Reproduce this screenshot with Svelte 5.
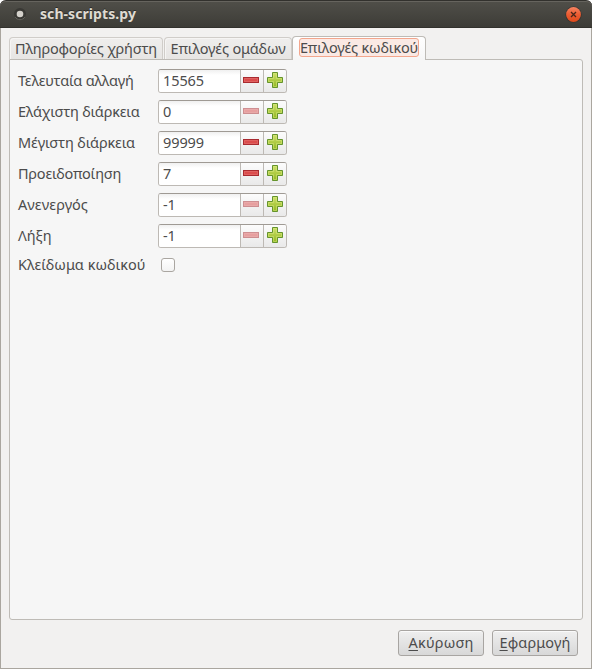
<script>
  // Spreads a label's letters so that it fills the given width.
  function fit(node, width) {
    const natural = node.getBoundingClientRect().width;
    const count = node.textContent.length;
    node.style.letterSpacing = `${(width - natural) / count}px`;
  }

  let rows = $state([
    { label: 'Τελευταία αλλαγή', width: 115.5, value: '15565', min: false },
    { label: 'Ελάχιστη διάρκεια', width: 121.5, value: '0', min: true },
    { label: 'Μέγιστη διάρκεια', width: 117, value: '99999', min: false },
    { label: 'Προειδοποίηση', width: 103, value: '7', min: false },
    { label: 'Ανενεργός', width: 70, value: '-1', min: true },
    { label: 'Λήξη', width: 33.5, value: '-1', min: true }
  ]);
</script>

<div class="window">
  <header>
    <svg class="appicon" width="14" height="14" viewBox="0 0 14 14">
      <circle cx="7" cy="7" r="6" fill="#393834" />
      <path d="M2 10a6 6 0 0 0 10 0" fill="none" stroke="#64635d" />
      <circle cx="7" cy="7" r="3.3" fill="#d4d1cb" />
    </svg>
    <h1><span use:fit={96}>sch-scripts.py</span></h1>
    <svg class="close" width="17" height="17" viewBox="0 0 17 17">
      <defs>
        <linearGradient id="orange" x1="0" y1="0" x2="0" y2="1">
          <stop offset="0" stop-color="#f58462" />
          <stop offset=".5" stop-color="#ec5c32" />
          <stop offset="1" stop-color="#df4a1b" />
        </linearGradient>
      </defs>
      <circle cx="8.5" cy="8.5" r="8.1" fill="#35332f" />
      <circle cx="8.5" cy="8.5" r="7.4" fill="url(#orange)" />
      <path d="M6 6l5 5M11 6l-5 5" stroke="#48271b" stroke-width="1.3" />
    </svg>
  </header>

  <nav>
    <button class="tab first"><span use:fit={142}>Πληροφορίες χρήστη</span></button>
    <button class="tab second"><span use:fit={115}>Επιλογές ομάδων</span></button>
    <button class="tab active"><span class="focus"><span use:fit={118}>Επιλογές κωδικού</span></span></button>
  </nav>

  <main>
    {#each rows as row}
      <div class="row">
        <div class="label"><span use:fit={row.width}>{row.label}</span></div>
        <div class="spin">
          <div class="value">{row.value}</div>
          <div class="step">
            <svg class:dim={row.min} width="16" height="6" viewBox="0 0 16 6">
              <rect x=".5" y=".5" width="15" height="5" fill="#db4d4d" stroke="#a92b30" />
              <path d="M1.5 1.5h13v3h-13z" fill="none" stroke="#e67775" opacity=".5" />
            </svg>
          </div>
          <div class="step plus">
            <svg width="16" height="16" viewBox="0 0 16 16">
              <defs>
                <linearGradient id="green" x1="0" y1="0" x2="0" y2="1">
                  <stop offset="0" stop-color="#cfe16b" />
                  <stop offset="1" stop-color="#91b720" />
                </linearGradient>
              </defs>
              <path d="M5.5.5h5v5h5v5h-5v5h-5v-5h-5v-5h5z" fill="url(#green)" stroke="#65942c" />
              <path d="M6.5 6.5v-5h3v5h5v3h-5v5h-3v-5h-5v-3z" fill="none" stroke="#d9ea82" opacity=".5" />
            </svg>
          </div>
        </div>
      </div>
    {/each}
    <div class="row lock">
      <div class="label"><span use:fit={127.5}>Κλείδωμα κωδικού</span></div>
      <div class="check"></div>
    </div>
  </main>

  <footer>
    <button class="action"><span use:fit={65}><u>Α</u>κύρωση</span></button>
    <button class="action"><span use:fit={71}><u>Ε</u>φαρμογή</span></button>
  </footer>
</div>

<style>
  :global(body) { background: #fff; }
  .window {
    box-sizing: border-box;
    width: 592px;
    height: 669px;
    display: flex;
    flex-direction: column;
    background: #f2f1f0;
    border: 1px solid #aaa69f;
    border-top: 0;
    border-radius: 6px 6px 0 0;
    font: 14.5px/20px "Noto Sans", "Open Sans", sans-serif;
    color: #4c4c4c;
    white-space: nowrap;
  }
  span { display: inline-block; }
  button { font: inherit; color: inherit; margin: 0; }
  header {
    box-sizing: border-box;
    height: 28px;
    flex: none;
    margin: 0 -1px;
    padding: 0 10px 0 13px;
    display: flex;
    align-items: center;
    background: linear-gradient(#504f49, #3d3c37);
    border: solid #32312d;
    border-width: 1px 0;
    border-radius: 6px 6px 0 0;
    box-shadow: inset 0 1px #66645e;
  }
  .close { margin-left: auto; }
  h1 {
    margin: 0 0 0 13px;
    font-size: 14px;
    line-height: 20px;
    font-weight: 700;
    color: #dfdbd2;
    text-shadow: 0 -1px #2c2b28;
  }
  nav {
    height: 32px;
    flex: none;
    display: flex;
    align-items: flex-end;
    padding-left: 8px;
    position: relative;
    z-index: 1;
  }
  .tab {
    box-sizing: border-box;
    height: 22px;
    margin-bottom: 1px;
    padding: 0 0 2px;
    display: flex;
    justify-content: center;
    align-items: center;
    border: 1px solid #d0cdc9;
    border-bottom: 0;
    border-radius: 4px 4px 0 0;
    background: linear-gradient(#efeeed, #e7e5e3);
    box-shadow: inset 1px 1px #f6f5f4;
  }
  .first { width: 154px; }
  .second { width: 128px; margin-left: 1px; }
  .active {
    width: 134px;
    height: 24px;
    margin-bottom: 0;
    padding: 0;
    border-color: #bebbb6;
    background: linear-gradient(#fff, #f6f6f6);
    box-shadow: none;
  }
  .focus {
    box-sizing: border-box;
    height: 19px;
    width: 120px;
    margin-bottom: 2px;
    line-height: 16px;
    border: 1px solid #f3a68d;
    border-radius: 3px;
    background: #fae9e4;
  }
  .focus span { line-height: 16px; }
  main {
    box-sizing: border-box;
    width: 574px;
    height: 561px;
    flex: none;
    margin: -1px 0 0 8px;
    padding: 9px 0 0 8px;
    border: 1px solid #bebbb6;
    border-radius: 0 3px 3px 3px;
    background: #f6f6f6;
  }
  .row { display: flex; height: 24px; margin-bottom: 7px; }
  .label { width: 140px; line-height: 22px; }
  .spin {
    box-sizing: border-box;
    width: 129px;
    display: flex;
    border: 1px solid #bdb9b4;
    border-top-color: #9f9a94;
    border-radius: 3px;
    background: #fff;
    overflow: hidden;
  }
  .value {
    width: 77px;
    padding-left: 4px;
    line-height: 21px;
    letter-spacing: -.1px;
    background: linear-gradient(#f0f0f0, #fff 5px);
  }
  .step {
    box-sizing: border-box;
    width: 23px;
    border-left: 1px solid #bdb9b4;
    background: linear-gradient(#fcfcfc, #e9e9e9);
    display: flex;
    align-items: center;
    justify-content: center;
    padding-bottom: 2px;
  }
  .plus { flex: 1; }
  .step svg { flex: none; margin-right: 2px; }
  .plus svg { margin: 0; }
  .dim { opacity: .5; }
  .lock { margin-top: -2px; }
  .check {
    box-sizing: border-box;
    width: 14px;
    height: 14px;
    margin: 5px 0 0 3px;
    border: 1px solid #aaa6a1;
    border-radius: 3px;
    background: linear-gradient(#fff, #f3f3f3);
  }
  footer { display: flex; justify-content: flex-end; gap: 8px; padding: 10px 13px 0 0; }
  .action {
    box-sizing: border-box;
    width: 86px;
    height: 26px;
    padding: 0 0 2px;
    border: 1px solid #a8a5a2;
    border-radius: 3px;
    background: linear-gradient(#efefef, #d8d8d8);
    box-shadow: inset 0 1px #fafafa;
    line-height: 22px;
  }
  u { text-underline-offset: 2px; }
</style>
